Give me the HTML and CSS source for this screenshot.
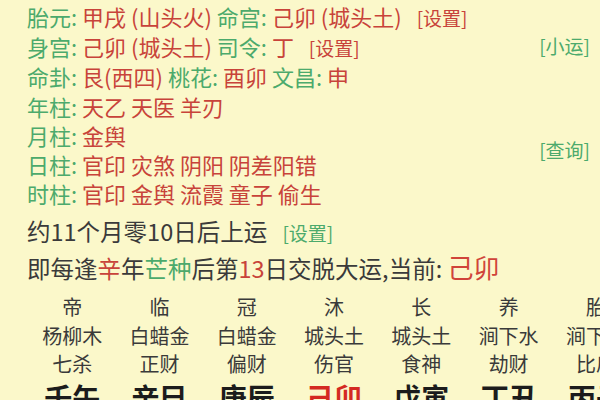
FILE: index.html
```html
<!DOCTYPE html>
<html lang="zh">
<head>
<meta charset="utf-8">
<link rel="stylesheet" href="styles.css">
</head>
<body>
<div class="page">
  <div class="top">
    <div class="info">
      <div class="line"><span class="g">胎元:</span> <span class="r">甲戌 (山头火)</span> <span class="g">命宫:</span> <span class="r">己卯 (城头土)</span> <span class="link r">[设置]</span></div>
      <div class="line"><span class="g">身宫:</span> <span class="r">己卯 (城头土)</span> <span class="g">司令:</span> <span class="r">丁</span> <span class="link r">[设置]</span></div>
      <div class="line"><span class="g">命卦:</span> <span class="r">艮(西四)</span> <span class="g">桃花:</span> <span class="r">酉卯</span> <span class="g">文昌:</span> <span class="r">申</span></div>
      <div class="line"><span class="g">年柱:</span> <span class="r">天乙 天医 羊刃</span></div>
      <div class="line"><span class="g">月柱:</span> <span class="r">金舆</span></div>
      <div class="line"><span class="g">日柱:</span> <span class="r">官印 灾煞 阴阳 阴差阳错</span></div>
      <div class="line"><span class="g">时柱:</span> <span class="r">官印 金舆 流霞 童子 偷生</span></div>
    </div>
    <div class="side">
      <span class="link g xiaoyun">[小运]</span>
      <span class="link g chaxun">[查询]</span>
    </div>
  </div>
  <div class="line2 start">约11个月零10日后上运 <span class="link g setup">[设置]</span></div>
  <div class="line2 every">即每逢<span class="r">辛</span>年<span class="g">芒种</span>后第<span class="r">13</span>日交脱大运,当前: <span class="cur">己卯</span></div>
  <div class="table">
    <div class="cell">帝</div><div class="cell">临</div><div class="cell">冠</div><div class="cell">沐</div><div class="cell">长</div><div class="cell">养</div><div class="cell">胎</div>
    <div class="cell">杨柳木</div><div class="cell">白蜡金</div><div class="cell">白蜡金</div><div class="cell">城头土</div><div class="cell">城头土</div><div class="cell">涧下水</div><div class="cell">涧下水</div>
    <div class="cell">七杀</div><div class="cell">正财</div><div class="cell">偏财</div><div class="cell">伤官</div><div class="cell">食神</div><div class="cell">劫财</div><div class="cell">比肩</div>
    <div class="cell gz">壬午</div><div class="cell gz">辛巳</div><div class="cell gz">庚辰</div><div class="cell gz red">己卯</div><div class="cell gz">戊寅</div><div class="cell gz">丁丑</div><div class="cell gz">丙子</div>
  </div>
</div>
</body>
</html>
```
FILE: styles.css
```css
html, body {
  margin: 0;
  padding: 0;
}
body {
  width: 600px;
  height: 400px;
  overflow: hidden;
  background: #fbf8ca;
  font-family: "Noto Sans CJK SC", "Noto Sans", sans-serif;
  color: #3a3a3a;
}
.page {
  width: 600px;
  height: 400px;
  overflow: hidden;
}
.top {
  display: flex;
  padding: 2px 10px 0 27px;
}
.info {
  flex: 1;
}
.line {
  font-size: 22px;
  line-height: 29.2px;
  white-space: nowrap;
}
.g { color: #4caa6c; }
.r { color: #c8433a; }
.link {
  font-size: 19px;
  margin-left: 10px;
}
.side {
  display: flex;
  flex-direction: column;
  align-items: flex-end;
  line-height: 29px;
}
.side .link { margin-left: 0; }
.xiaoyun { margin-top: 29px; }
.chaxun { margin-top: 75px; }
.line2 {
  font-size: 23.5px;
  line-height: 34px;
  padding-left: 27px;
  white-space: nowrap;
}
.start { margin-top: 6px; }
.setup { margin-left: 10px; }
.cur {
  color: #d0443a;
  font-size: 26px;
}
.table {
  display: grid;
  grid-template-columns: repeat(7, 87.3px);
  padding-left: 28.5px;
  margin-top: 8px;
  font-size: 20px;
  line-height: 28.5px;
  color: #3a3a3a;
}
.cell {
  text-align: center;
  white-space: nowrap;
}
.gz {
  font-size: 28px;
  font-weight: bold;
  line-height: 36px;
  color: #1c1c1c;
}
.gz.red { color: #d42a22; }
```
